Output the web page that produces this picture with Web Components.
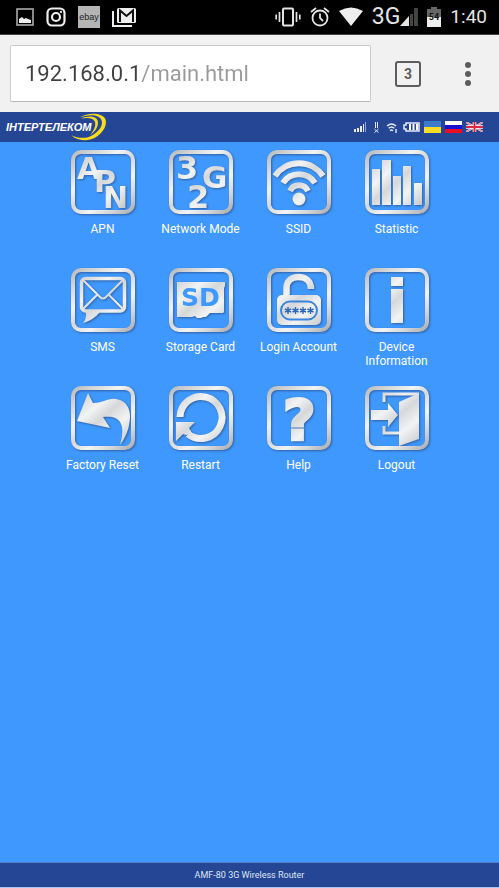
<!DOCTYPE html>
<html lang="en">
<head>
<meta charset="utf-8">
<meta name="viewport" content="width=device-width, initial-scale=1">
<title>AMF-80 3G Wireless Router</title>
<style>
  html, body { height: 100%; margin: 0; }
  body {
    display: flex;
    flex-direction: column;
    background: #3f98fe;
    color: #fff;
    font-family: Roboto, "Liberation Sans", sans-serif;
    --navy: #254694;
    --sky: #3f98fe;
  }
</style>
</head>
<body>
  <status-bar time="1:40"></status-bar>
  <browser-bar host="192.168.0.1" path="/main.html" tabs="3"></browser-bar>
  <router-header>ІНТЕРТЕЛЕКОМ</router-header>
  <menu-grid>
    <menu-tile icon="apn">APN</menu-tile>
    <menu-tile icon="network">Network Mode</menu-tile>
    <menu-tile icon="ssid">SSID</menu-tile>
    <menu-tile icon="statistic">Statistic</menu-tile>
    <menu-tile icon="sms">SMS</menu-tile>
    <menu-tile icon="storage">Storage Card</menu-tile>
    <menu-tile icon="login">Login Account</menu-tile>
    <menu-tile icon="device">Device Information</menu-tile>
    <menu-tile icon="reset">Factory Reset</menu-tile>
    <menu-tile icon="restart">Restart</menu-tile>
    <menu-tile icon="help">Help</menu-tile>
    <menu-tile icon="logout">Logout</menu-tile>
  </menu-grid>
  <router-footer>AMF-80 3G Wireless Router</router-footer>

<script>
class StatusBar extends HTMLElement {
  constructor() {
    super();
    this.attachShadow({ mode: 'open' });
  }

  connectedCallback() {
    this.shadowRoot.innerHTML = `
      <style>
        :host {
          display: flex;
          justify-content: space-between;
          align-items: center;
          height: 34px;
          padding: 0 12px 0 16px;
          background: #000;
          border-bottom: 1px solid #484144;
          color: #e4e4e4;
        }
        .group { display: flex; align-items: center; }
        .notes { gap: 12px; }
        .system { gap: 9px; }
        svg { display: block; flex: none; }
        .ebay {
          display: block;
          width: 22px;
          background: #b5b5b5;
          color: #222;
          font: 9px/22px "Liberation Sans", sans-serif;
          text-align: center;
        }
        .mobile { display: flex; align-items: center; font-size: 23px; line-height: 34px; }
        .time { font-size: 19px; line-height: 34px; }
      </style>
      <div class="group notes">
        <svg width="18" height="18" viewBox="0 0 18 18" aria-hidden="true">
          <rect x="1" y="1" width="16" height="16" fill="none" stroke="#aaa" stroke-width="1.6"/>
          <path d="M3 15v-4l3-2 2 2 2-1 2 1 3 1v3z" fill="#eee"/>
        </svg>
        <svg width="20" height="20" viewBox="0 0 20 20" fill="none" stroke="#eee" stroke-width="2.2" aria-hidden="true">
          <rect x="1.5" y="1.5" width="17" height="17" rx="4.5"/>
          <circle cx="10" cy="10" r="4"/>
          <circle cx="15" cy="5" r=".5" stroke-width="1.3"/>
        </svg>
        <span class="ebay">ebay</span>
        <svg width="24" height="20" viewBox="0 0 24 20" aria-hidden="true">
          <path d="M1 4v15h19" fill="none" stroke="#eee" stroke-width="2"/>
          <rect x="5" y="1" width="19" height="15" rx="1.5" fill="#eee"/>
          <path d="M8 15V3.500l6.500 5.500L21 3.500V15" fill="none" stroke="#111" stroke-width="2"/>
        </svg>
      </div>
      <div class="group system">
        <svg width="26" height="20" viewBox="0 0 26 20" fill="none" stroke="#e4e4e4" stroke-width="2" aria-hidden="true">
          <rect x="8" y="1.500" width="10" height="17" rx="1"/>
          <path d="M4.500 5v10M1.200 7.500v5M21.500 5v10M24.800 7.500v5" stroke-width="1.700"/>
        </svg>
        <svg width="20" height="20" viewBox="0 0 20 20" fill="none" stroke="#e4e4e4" stroke-width="1.800" aria-hidden="true">
          <circle cx="10" cy="11" r="7.500"/>
          <path d="M10 6.500V11l3 3M1 5l5-4M19 5l-5-4"/>
        </svg>
        <svg width="24" height="20" viewBox="0 0 24 20" aria-hidden="true">
          <path d="M0 4Q12-3 24 4L12 19z" fill="#eee"/>
        </svg>
        <span class="mobile">3G
          <svg width="18" height="20" viewBox="0 0 18 20" aria-hidden="true">
            <path d="M0 19l9-10v10z" fill="#e4e4e4"/>
            <path d="M10 19V7h3v12zM14 19V1h4v18z" fill="#444"/>
          </svg>
        </span>
        <svg width="14" height="20" viewBox="0 0 14 20" aria-hidden="true">
          <path d="M4 0h6v2h4v9H0V2h4z" fill="#666"/>
          <path d="M0 10h14v10H0z" fill="#eee"/>
          <text x="7" y="13" text-anchor="middle" font-size="9" font-weight="bold" fill="#111">54</text>
        </svg>
        <span class="time">${this.getAttribute('time')}</span>
      </div>
    `;
  }
}

class BrowserBar extends HTMLElement {
  constructor() {
    super();
    this.attachShadow({ mode: 'open' });
  }

  connectedCallback() {
    const host = this.getAttribute('host');
    const path = this.getAttribute('path');

    this.shadowRoot.innerHTML = `
      <style>
        :host {
          display: flex;
          align-items: center;
          gap: 24px;
          padding: 10px 9px 10px 10px;
          background: #f1f1f1;
          color: #5c5c5c;
        }
        label {
          flex: 1;
          display: flex;
          box-sizing: border-box;
          height: 57px;
          padding: 0 14px;
          background: #fff;
          border: 1px solid #ccc;
          border-bottom-color: #b8b8b8;
          border-radius: 2px;
        }
        /* host part is dark, the path is grey */
        input {
          flex: 1;
          min-width: 0;
          padding: 0;
          border: 0;
          outline: 0;
          font: 22px Roboto, sans-serif;
          background: linear-gradient(90deg, #404040 114px, #9a9a9a 114px);
          -webkit-background-clip: text;
          background-clip: text;
          -webkit-text-fill-color: transparent;
        }
        button {
          display: grid;
          place-items: center;
          padding: 0;
          border: 0;
          background: none;
          color: inherit;
        }
        .tabs {
          box-sizing: border-box;
          width: 26px;
          height: 26px;
          border: 2px solid;
          border-radius: 3px;
          font: bold 14px Roboto, sans-serif;
        }
        .more { width: 45px; height: 40px; }
      </style>
      <label><input type="text" aria-label="Address" value="${host}${path}" spellcheck="false"></label>
      <button class="tabs" aria-label="Open tabs">${this.getAttribute('tabs')}</button>
      <button class="more" aria-label="More">
        <svg width="6" height="24" viewBox="0 0 6 24" fill="#5c5c5c">
          <circle cx="3" cy="3" r="3"/><circle cx="3" cy="12" r="3"/><circle cx="3" cy="21" r="3"/>
        </svg>
      </button>
    `;
  }
}

class RouterHeader extends HTMLElement {
  constructor() {
    super();
    this.attachShadow({ mode: 'open' });
  }

  connectedCallback() {
    this.shadowRoot.innerHTML = `
      <style>
        :host {
          display: flex;
          justify-content: space-between;
          align-items: center;
          height: 30px;
          padding: 0 16px 0 6px;
          background: var(--navy);
        }
        .logo { display: flex; align-items: center; }
        .name { font: italic bold 11px "Liberation Sans", sans-serif; }
        .logo svg { margin-left: -20px; }
        .state, .flags { display: flex; align-items: center; }
        .state { gap: 5px; }
        .flags { gap: 4px; margin-left: 4px; }
        .right { display: flex; align-items: center; }
        svg { display: block; }
        button { padding: 0; border: 0; background: none; }
      </style>
      <div class="logo">
        <span class="name"><slot></slot></span>
        <svg width="36" height="28" viewBox="0 0 38 28" fill="#f6dc1c" aria-hidden="true">
          <path d="M9 4C17-1 31-2 36 5c4 8-6 22-20 23C10 28 3 26 1 23c8 4 18 3 24-2C33 15 35 8 30 4 25 0 15 2 9 4z"/>
          <path d="M11 5c7-3 15-3 17 2 2 5-2 12-8 16 4-5 7-11 5-15-2-4-8-4-14-3z"/>
        </svg>
      </div>
      <div class="right">
        <div class="state">
          <svg width="13" height="10" viewBox="0 0 13 10" fill="#e5eaf6" aria-hidden="true">
            <path d="M0 10V7h2v3zM3 10V6h2v4zM6 10V4h2v6zM9 10V2h1v8z"/>
            <path d="M11 10V0h1v10z" opacity=".6"/>
          </svg>
          <svg width="9" height="11" viewBox="0 0 9 11" fill="none" stroke="#e5eaf6" aria-hidden="true">
            <path d="M3.500 0v6M5.500 0v6M2.500 7l4 3.500M6.500 7l-4 3.500"/>
          </svg>
          <svg width="12" height="11" viewBox="0 0 12 11" fill="none" stroke="#e5eaf6" stroke-width="1.400" aria-hidden="true">
            <path d="M1 4q4.500-4 9 0M2.700 6.300q2.800-2.600 5.600 0M4 8.700q1.500-1.300 3 0M10 7v4"/>
          </svg>
          <svg width="17" height="10" viewBox="0 0 17 10" aria-hidden="true">
            <path d="M3 1h13v8H3V7H1V3h2z" fill="none" stroke="#e5eaf6" stroke-width="1.500"/>
            <path d="M6 2h2v6H6zM9.500 2h2v6h-2zM13 2h2v6h-2z" fill="#fff"/>
          </svg>
        </div>
        <div class="flags">
          <button aria-label="Українська">
            <svg width="17" height="12" viewBox="0 0 17 12">
              <path d="M0 0h17v6H0z" fill="#3d7ccb"/><path d="M0 6h17v6H0z" fill="#f7dc28"/>
            </svg>
          </button>
          <button aria-label="Русский">
            <svg width="17" height="12" viewBox="0 0 17 12">
              <path d="M0 0h17v4H0z" fill="#fff"/><path d="M0 4h17v4H0z" fill="#1713d0"/><path d="M0 8h17v4H0z" fill="#f00c25"/>
            </svg>
          </button>
          <button aria-label="English">
            <svg width="17" height="10" viewBox="0 0 17 10">
              <path d="M0 0h17v10H0z" fill="#26367f"/>
              <path d="M0 0l17 10M17 0L0 10" stroke="#e9dbe4" stroke-width="2"/>
              <path d="M0 0l17 10M17 0L0 10" stroke="#d84a63" stroke-width=".7"/>
              <path d="M8.500 0v10M0 5h17" stroke="#fff" stroke-width="3.600"/>
              <path d="M8.500 0v10M0 5h17" stroke="#dc2746" stroke-width="2"/>
            </svg>
          </button>
        </div>
      </div>
    `;
  }
}

class MenuGrid extends HTMLElement {
  constructor() {
    super();
    this.attachShadow({ mode: 'open' });
    this.shadowRoot.innerHTML = `
      <style>
        :host { display: block; flex: 1; padding: 8px 16px; }
        nav {
          display: grid;
          grid-template-columns: repeat(4, 1fr);
          grid-auto-rows: minmax(100px, auto);
          row-gap: 18px;
          max-width: 392px;
          margin: 0 auto;
        }
      </style>
      <nav><slot></slot></nav>
    `;
  }
}

// Drawings on a 64x64 grid, painted with the silver gradient of the tile
const ICONS = {
  apn: `
    <text x="6" y="29" font-size="30">A</text>
    <text x="23" y="42" font-size="30">P</text>
    <text x="32" y="58" font-size="30">N</text>`,
  network: `
    <text x="7" y="29" font-size="32">3</text>
    <text x="33" y="38" font-size="31">G</text>
    <text x="18" y="58" font-size="32">2</text>`,
  ssid: `
    <circle cx="32" cy="49" r="6.500"/>
    <g fill="none" stroke="url(#silver)" stroke-width="6">
      <path d="M8 26A29 29 0 0 1 56 26"/>
      <path d="M16 33A19 19 0 0 1 48 33"/>
      <path d="M23 41A10 10 0 0 1 41 41"/>
    </g>`,
  statistic: `
    <path d="M7 19h8v36H7zM17 10h9v45h-9zM28 26h8v29h-8zM38 16h8v39h-8zM49 33h8v22h-8z"/>`,
  sms: `
    <path d="M14 42l1 4c0 4-1 7-3 9 7-2 12-5 17-11z"/>
    <g fill="none" stroke="url(#silver)">
      <rect x="10.500" y="10.500" width="43" height="32.500" rx="4" stroke-width="3.500"/>
      <path d="M12 12l17 17q3 3 6 0l17-17M12 41l14-14M52 41L38 27" stroke-width="2"/>
    </g>`,
  storage: `
    <path d="M8 14h48v4l-1 2v24l-1 1H41l-4 4h-3l-2 1h-4l-2-2-3 1H8z"/>
    <text x="12" y="38" font-size="25" class="cut">SD</text>`,
  login: `
    <path d="M19.500 30V20c0-7 5-11 12-11s12.500 4 12.500 12" fill="none" stroke="url(#silver)" stroke-width="6.500"/>
    <rect x="10" y="27" width="44" height="30" rx="5"/>
    <rect x="14" y="33.500" width="36" height="18" rx="9" stroke="#3b86da" stroke-width="2"/>
    <path d="M21 39v7M18 41l6 3M24 41l-6 3M28.500 39v7M25.500 41l6 3M31.500 41l-6 3M36 39v7M33 41l6 3M39 41l-6 3M43.500 39v7M40.500 41l6 3M46.500 41l-6 3" stroke="#2b66b8" stroke-width="1.400"/>`,
  device: `
    <path d="M26 9h12v9H26zM26 21h12v34H26z"/>`,
  reset: `
    <path d="M6 35L17 7l5 10c12 0 14-5 23-4 9 1 14 8 14 17 0 11-4 21-10 29 2-8 4-17 0-23-3-5-9-6-17-5l7 11z"/>`,
  restart: `
    <path d="M11 31A21 21 0 1 1 19 48" fill="none" stroke="url(#silver)" stroke-width="7"/>
    <path d="M7 36h19L20 42l3 5-6 2-3-1-7 7z"/>`,
  help: `
    <text x="16" y="53" font-size="56" stroke="url(#silver)" stroke-width="3">?</text>`,
  logout: `
    <path d="M54 8H19v8M19 40v7h15" fill="none" stroke="url(#silver)" stroke-width="3"/>
    <path d="M6 24h17v-7l10 12-10 12v-7H6z"/>
    <path d="M34 16l20-9v46l-20 7z"/>`
};

class MenuTile extends HTMLElement {
  constructor() {
    super();
    this.attachShadow({ mode: 'open' });
  }

  connectedCallback() {
    this.shadowRoot.innerHTML = `
      <style>
        :host { display: block; }
        a {
          display: flex;
          flex-direction: column;
          align-items: center;
          gap: 8px;
          color: #fff;
          text-decoration: none;
          text-align: center;
          font-size: 12px;
          line-height: 14px;
        }
        a:focus-visible { outline: 2px solid #fff; }
        svg {
          display: block;
          overflow: visible;
          filter: drop-shadow(1px 1px 1px rgba(40, 60, 100, 0.6));
        }
        text { font-family: "DejaVu Sans", sans-serif; font-weight: bold; }
        .cut { fill: var(--sky); }
        .label { max-width: 84px; }
      </style>
      <a href="#${this.getAttribute('icon')}">
        <svg width="64" height="64" viewBox="0 0 64 64" fill="url(#silver)" aria-hidden="true">
          <defs>
            <linearGradient id="silver" gradientUnits="userSpaceOnUse" x1="4" y1="0" x2="58" y2="64">
              <stop offset="0" stop-color="#b9bcc0"/>
              <stop offset=".15" stop-color="#d2d4d6"/>
              <stop offset=".35" stop-color="#f2f3f4"/>
              <stop offset=".5" stop-color="#d6d7d9"/>
              <stop offset=".68" stop-color="#f2f3f4"/>
              <stop offset=".85" stop-color="#d2d4d6"/>
              <stop offset="1" stop-color="#aeb1b6"/>
            </linearGradient>
          </defs>
          <rect x="2" y="2" width="60" height="60" rx="8" fill="none" stroke="url(#silver)" stroke-width="4"/>
          ${ICONS[this.getAttribute('icon')]}
        </svg>
        <span class="label"><slot></slot></span>
      </a>
    `;
  }
}

class RouterFooter extends HTMLElement {
  constructor() {
    super();
    this.attachShadow({ mode: 'open' });
    this.shadowRoot.innerHTML = `
      <style>
        :host {
          display: block;
          background: var(--navy);
          border-top: 1px solid #5580c4;
          border-bottom: 1px solid #a9c4ee;
          color: #dfe6f5;
          font-size: 9px;
          line-height: 24px;
          text-align: center;
        }
      </style>
      <slot></slot>
    `;
  }
}

customElements.define('status-bar', StatusBar);
customElements.define('browser-bar', BrowserBar);
customElements.define('router-header', RouterHeader);
customElements.define('menu-grid', MenuGrid);
customElements.define('menu-tile', MenuTile);
customElements.define('router-footer', RouterFooter);
</script>
</body>
</html>
